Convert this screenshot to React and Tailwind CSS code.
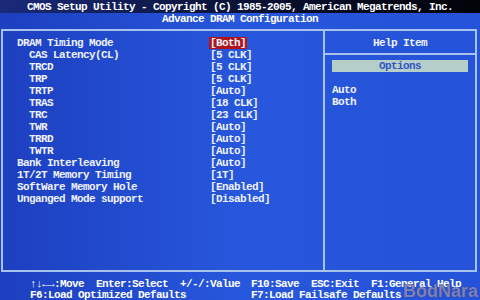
const items = [
  { label: 'DRAM Timing Mode', value: '[Both]', sub: false, active: true },
  { label: 'CAS Latency(CL)', value: '[5 CLK]', sub: true },
  { label: 'TRCD', value: '[5 CLK]', sub: true },
  { label: 'TRP', value: '[5 CLK]', sub: true },
  { label: 'TRTP', value: '[Auto]', sub: true },
  { label: 'TRAS', value: '[18 CLK]', sub: true },
  { label: 'TRC', value: '[23 CLK]', sub: true },
  { label: 'TWR', value: '[Auto]', sub: true },
  { label: 'TRRD', value: '[Auto]', sub: true },
  { label: 'TWTR', value: '[Auto]', sub: true },
  { label: 'Bank Interleaving', value: '[Auto]' },
  { label: '1T/2T Memory Timing', value: '[1T]' },
  { label: 'SoftWare Memory Hole', value: '[Enabled]' },
  { label: 'Unganged Mode support', value: '[Disabled]' },
];

const Row = ({ label, value, sub, active }) => (
  <div className="flex h-[12px] items-center whitespace-pre">
    <span className={`w-[193px] ${sub ? 'pl-[12px]' : ''}`}>{label}</span>
    <span className={active ? 'bg-[#b3141c] px-[1px] -ml-[1px] h-[12px] leading-[12px]' : ''}>{value}</span>
  </div>
);

export default function App() {
  return (
    <div
      className="relative w-[480px] h-[300px] overflow-hidden bg-gradient-to-r from-[#1d3fc0] via-[#2757dc] to-[#2452d8] text-[#eef2fb] font-bold text-[11px] tracking-[-0.6px] leading-[12px]"
      style={{ fontFamily: '"Liberation Mono", "DejaVu Sans Mono", monospace' }}
    >
      {/* title bar */}
      <div className="h-[13px] flex items-center justify-center bg-gradient-to-r from-[#1a2a7a] via-[#0a1236] to-[#020308] text-white whitespace-pre">
        CMOS Setup Utility - Copyright (C) 1985-2005, American Megatrends, Inc.
      </div>
      <div className="h-[12px] flex items-center justify-center text-white">
        Advance DRAM Configuration
      </div>

      {/* main box */}
      <div className="mt-[4px] ml-[1px] w-[476px] h-[243px] border-2 border-[#a7c3ec] flex">
        <div className="w-[322px] border-r-2 border-[#a7c3ec] pl-[14px] pt-[6px]">
          {items.map((it) => (
            <Row key={it.label} {...it} />
          ))}
        </div>
        <div className="flex-1 flex flex-col">
          <div className="h-[24px] border-b-2 border-[#a7c3ec] flex items-center justify-center pt-[1px]">
            Help Item
          </div>
          <div className="mt-[5px] mx-[7px] h-[12px] bg-[#b5cfc8] text-[#2f55c6] flex items-center justify-center">
            Options
          </div>
          <div className="mt-[12px] pl-[7px]">
            <div className="h-[12px]">Auto</div>
            <div className="h-[12px]">Both</div>
          </div>
        </div>
      </div>

      {/* footer */}
      <div className="pl-[30px] pt-[6px] text-white whitespace-pre">
        <div className="flex h-[11px] items-center">
          <span className="w-[221px]">↑↓←→:Move  Enter:Select  +/-/:Value</span>
          <span>F10:Save  ESC:Exit  F1:General Help</span>
        </div>
        <div className="flex h-[11px] items-center">
          <span className="w-[221px]">F6:Load Optimized Defaults</span>
          <span>F7:Load Failsafe Defaults</span>
        </div>
      </div>

      {/* watermark */}
      <div
        className="absolute right-[2px] bottom-[0px] text-[18px] font-bold tracking-[0px] text-[#9a9ccc]/75 leading-[18px]"
        style={{ fontFamily: '"Liberation Sans", Arial, sans-serif', textShadow: '0 0 1px #30306a' }}
      >
        BodNara
      </div>
    </div>
  );
}
